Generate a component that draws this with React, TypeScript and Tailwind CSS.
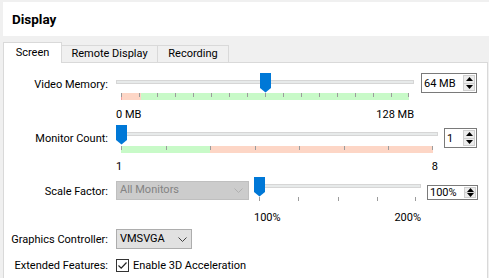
import React from "react";

function Chevron({ color }: { color: string }) {
  return (
    <svg width="9" height="5" viewBox="0 0 9 5" fill="none">
      <path d="M0.5 0.5 L4.5 4.5 L8.5 0.5" stroke={color} strokeWidth="1" />
    </svg>
  );
}

function Handle({ left }: { left: number }) {
  return (
    <svg className="absolute top-0" style={{ left }} width="11" height="20" viewBox="0 0 11 20">
      <path d="M0 0 H11 V15 L5.5 19.5 L0 15 Z" fill="#0078d7" />
    </svg>
  );
}

function Spin({ box, text }: { box: string; text: string }) {
  return (
    <div className={`flex border border-[#7a7a7a] bg-white ${box}`}>
      <div className="flex-1 pl-[2px] flex items-center leading-none">{text}</div>
      <div className="flex flex-col w-[12px] my-[1px] mr-[1px] border border-[#cfcfcf] bg-[#ececec]">
        <div className="flex-1 flex items-center justify-center border-b border-[#cfcfcf]">
          <svg width="7" height="4" viewBox="0 0 7 4"><path d="M3.5 0 L7 4 H0 Z" fill="#000" /></svg>
        </div>
        <div className="flex-1 flex items-center justify-center">
          <svg width="7" height="4" viewBox="0 0 7 4"><path d="M0 0 H7 L3.5 4 Z" fill="#000" /></svg>
        </div>
      </div>
    </div>
  );
}

interface Zone { w: number; color: string }

function Slider({
  size, handle, ticks, step, zones, barTop, lo, hi, labelTop, tickOnly,
}: {
  size: string; handle: number; ticks: number; step: number; zones?: Zone[];
  barTop: string; lo: string; hi: string; labelTop: string; tickOnly?: boolean;
}) {
  const barWidth = (ticks - 1) * step;
  return (
    <div className={`flex flex-col shrink-0 ${size}`}>
      <div className="relative h-[20px]">
        <div className="mt-[7px] h-[4px] bg-[#e7eaea] border border-[#d6d6d6]" />
        <Handle left={handle} />
      </div>
      <div className={`relative mx-[5px] flex ${tickOnly ? "h-[4px]" : "h-[7px]"} ${barTop}`}>
        {zones && zones.map((z, i) => (
          <div key={i} style={{ width: z.w, backgroundColor: z.color }} className="h-full" />
        ))}
        {zones && <div className="flex-1 h-full" style={{ backgroundColor: zones[zones.length - 1].color }} />}
        {Array.from({ length: ticks }).map((_, k) => (
          <div
            key={k}
            className="absolute top-0 w-px h-[4px] bg-[#9c9c9c]"
            style={{ left: Math.min(Math.round(k * step), barWidth - 1) }}
          />
        ))}
      </div>
      <div className={`flex justify-between leading-[15px] ${labelTop}`}>
        <span>{lo}</span>
        <span>{hi}</span>
      </div>
    </div>
  );
}

function Label({ text, top }: { text: string; top: string }) {
  return (
    <div className={`w-[104px] shrink-0 flex justify-end whitespace-nowrap leading-[15px] ${top}`}>
      {text}
    </div>
  );
}

export default function App() {
  return (
    <div className="w-[489px] h-[278px] overflow-hidden bg-[#f0f0f0] text-[11px] text-black font-['Roboto','Liberation_Sans',sans-serif]">
      <div className="mt-[2px] ml-[3px] h-[34px] bg-white flex items-center pl-[9px] font-bold text-[13.5px]">
        Display
      </div>

      <div className="ml-[3px] mt-[6px] flex items-end h-[20px]">
        <div className="relative z-10 w-[59px] h-[21px] -mb-px bg-white border border-b-0 border-[#d9d9d9] flex items-center justify-center">
          Screen
        </div>
        <div className="w-[96px] h-[17px] border-t border-r border-[#d9d9d9] flex items-center justify-center">
          Remote Display
        </div>
        <div className="w-[71px] h-[17px] border-t border-r border-[#d9d9d9] flex items-center justify-center">
          Recording
        </div>
      </div>

      <div className="ml-[3px] w-[485px] h-[220px] bg-white border border-b-0 border-[#d9d9d9] pt-[10px]">
        {/* Video Memory */}
        <div className="flex items-start h-[48px]">
          <Label text="Video Memory:" top="mt-[4px]" />
          <div className="ml-[8px] flex items-start">
            <Slider
              size="w-[298px]"
              handle={144}
              ticks={17}
              step={18}
              zones={[
                { w: 1, color: "#f2a0a0" },
                { w: 19, color: "#fdd6c6" },
                { w: 0, color: "#c8fac8" },
              ]}
              barTop="mt-0"
              lo="0 MB"
              hi="128 MB"
              labelTop="mt-[7px]"
            />
            <div className="ml-[7px]">
              <Spin box="w-[56px] h-[20px]" text="64 MB" />
            </div>
          </div>
        </div>

        {/* Monitor Count */}
        <div className="flex items-start h-[48px] mt-[4px]">
          <Label text="Monitor Count:" top="mt-[6px]" />
          <div className="ml-[8px] flex items-start">
            <Slider
              size="w-[322px]"
              handle={0}
              ticks={8}
              step={44.57}
              zones={[
                { w: 89, color: "#c8fac8" },
                { w: 0, color: "#fdd6c6" },
              ]}
              barTop="mt-[1px]"
              lo="1"
              hi="8"
              labelTop="mt-[6px]"
            />
            <div className="ml-[6px] mt-[3px]">
              <Spin box="w-[33px] h-[20px]" text="1" />
            </div>
          </div>
        </div>

        {/* Scale Factor */}
        <div className="flex items-start h-[48px] mt-[4px]">
          <Label text="Scale Factor:" top="mt-[7px]" />
          <div className="ml-[8px] flex items-start">
            <div className="mt-[4px] w-[133px] h-[19px] bg-[#cccccc] border border-[#bfbfbf] flex items-center justify-between pl-[3px] pr-[5px] text-[#838383]">
              <span>All Monitors</span>
              <Chevron color="#b0b0b0" />
            </div>
            <div className="ml-[5px]">
              <Slider
                size="w-[167px]"
                handle={0}
                ticks={5}
                step={39.25}
                barTop="mt-0"
                lo="100%"
                hi="200%"
                labelTop="mt-[9px]"
                tickOnly
              />
            </div>
            <div className="ml-[6px] mt-[8px]">
              <Spin box="w-[51px] h-[15px]" text="100%" />
            </div>
          </div>
        </div>

        {/* Graphics Controller */}
        <div className="flex items-start mt-[4px]">
          <Label text="Graphics Controller:" top="mt-[3px]" />
          <div className="ml-[8px] w-[76px] h-[20px] bg-[#e1e1e1] border border-[#adadad] flex items-center justify-between pl-[3px] pr-[4px]">
            <span>VMSVGA</span>
            <Chevron color="#404040" />
          </div>
        </div>

        {/* Extended Features */}
        <div className="flex items-start mt-[8px]">
          <Label text="Extended Features:" top="mt-[1px]" />
          <div className="ml-[8px] mt-[1px] flex items-center">
            <div className="w-[13px] h-[13px] border border-[#333333] bg-white flex items-center justify-center">
              <svg width="11" height="11" viewBox="0 0 11 11" fill="none">
                <path d="M1.5 5.5 L4.2 8.2 L9.5 2.5" stroke="#222" strokeWidth="1.2" />
              </svg>
            </div>
            <span className="ml-[4px] leading-[15px]">Enable 3D Acceleration</span>
          </div>
        </div>
      </div>
    </div>
  );
}
